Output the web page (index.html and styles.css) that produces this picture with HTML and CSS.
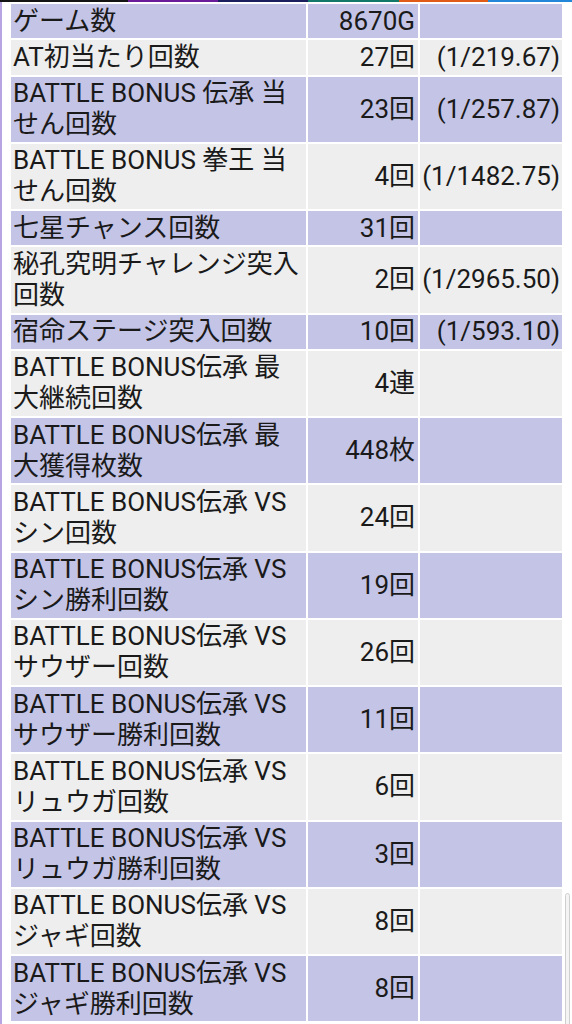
FILE: index.html
```html
<!DOCTYPE html>
<html lang="ja">

<head>
    <meta charset="UTF-8">
    <meta name="viewport" content="width=device-width, initial-scale=1.0">
    <title>データ</title>
    <link rel="stylesheet" href="styles.css">
</head>

<body>
    <div class="top-strip">
        <span class="seg seg-black"></span>
        <span class="seg seg-purple"></span>
        <span class="seg seg-navy"></span>
        <span class="seg seg-teal"></span>
        <span class="seg seg-orange"></span>
        <span class="seg seg-blue"></span>
    </div>

    <div class="frame">
        <table class="data-table">
            <colgroup>
                <col class="col-label">
                <col class="col-value">
                <col class="col-ratio">
            </colgroup>
            <tr class="odd"><td>ゲーム数</td><td class="num">8670G</td><td class="ratio"></td></tr>
            <tr class="even"><td>AT初当たり回数</td><td class="num">27回</td><td class="ratio">(1/219.67)</td></tr>
            <tr class="odd"><td>BATTLE BONUS 伝承 当せん回数</td><td class="num">23回</td><td class="ratio">(1/257.87)</td></tr>
            <tr class="even"><td>BATTLE BONUS 拳王 当せん回数</td><td class="num">4回</td><td class="ratio">(1/1482.75)</td></tr>
            <tr class="odd"><td>七星チャンス回数</td><td class="num">31回</td><td class="ratio"></td></tr>
            <tr class="even"><td>秘孔究明チャレンジ突入回数</td><td class="num">2回</td><td class="ratio">(1/2965.50)</td></tr>
            <tr class="odd"><td>宿命ステージ突入回数</td><td class="num">10回</td><td class="ratio">(1/593.10)</td></tr>
            <tr class="even"><td>BATTLE BONUS伝承 最大継続回数</td><td class="num">4連</td><td class="ratio"></td></tr>
            <tr class="odd"><td>BATTLE BONUS伝承 最大獲得枚数</td><td class="num">448枚</td><td class="ratio"></td></tr>
            <tr class="even"><td>BATTLE BONUS伝承 VS シン回数</td><td class="num">24回</td><td class="ratio"></td></tr>
            <tr class="odd"><td>BATTLE BONUS伝承 VS シン勝利回数</td><td class="num">19回</td><td class="ratio"></td></tr>
            <tr class="even"><td>BATTLE BONUS伝承 VS サウザー回数</td><td class="num">26回</td><td class="ratio"></td></tr>
            <tr class="odd"><td>BATTLE BONUS伝承 VS サウザー勝利回数</td><td class="num">11回</td><td class="ratio"></td></tr>
            <tr class="even"><td>BATTLE BONUS伝承 VS リュウガ回数</td><td class="num">6回</td><td class="ratio"></td></tr>
            <tr class="odd"><td>BATTLE BONUS伝承 VS リュウガ勝利回数</td><td class="num">3回</td><td class="ratio"></td></tr>
            <tr class="even"><td>BATTLE BONUS伝承 VS ジャギ回数</td><td class="num">8回</td><td class="ratio"></td></tr>
            <tr class="odd"><td>BATTLE BONUS伝承 VS ジャギ勝利回数</td><td class="num">8回</td><td class="ratio"></td></tr>
        </table>
    </div>

    <div class="scroll-thumb"></div>
</body>

</html>
```

FILE: styles.css
```css
* {
    margin: 0;
    padding: 0;
    box-sizing: border-box;
}

body,
html {
    height: 100%;
    background: #ffffff;
    font-family: Roboto, "Noto Sans CJK JP", sans-serif;
    color: #1a1a1a;
    overflow: hidden;
}

.top-strip {
    display: flex;
    height: 3px;
    border-bottom: 1px solid #ffffff;
}

.seg {
    height: 2px;
}

.seg-black { width: 128px; background: #141414; }
.seg-purple { width: 90px; background: #6a1b9a; }
.seg-navy { width: 90px; background: #1c1f5e; }
.seg-teal { width: 91px; background: #12796a; }
.seg-orange { width: 89px; background: #e05a18; }
.seg-blue { flex: 1; background: #2287d8; }

.frame {
    border-left: 2px solid #b7a4e0;
    padding-left: 7px;
    margin-top: -3px;
    padding-top: 2px;
    height: 100%;
}

.data-table {
    width: 555px;
    table-layout: fixed;
    border-collapse: separate;
    border-spacing: 2px 2.5px;
    font-size: 26px;
    line-height: 31px;
}

.col-label { width: 295px; }
.col-value { width: 110px; }
.col-ratio { width: 142px; }

.data-table td {
    padding: 1.5px 2px 1.75px;
    vertical-align: middle;
}

.odd td {
    background: #c4c4e6;
}

.even td {
    background: #eeeeee;
}

.data-table td.num {
    text-align: right;
    padding-right: 3px;
    white-space: nowrap;
}

.data-table td.ratio {
    text-align: right;
    padding-right: 2px;
    white-space: nowrap;
}

.scroll-thumb {
    position: fixed;
    left: 565px;
    top: 893px;
    width: 5px;
    height: 140px;
    border: 1px solid #cfcfcf;
    border-radius: 3px;
    background: #f4f4f4;
}
```
